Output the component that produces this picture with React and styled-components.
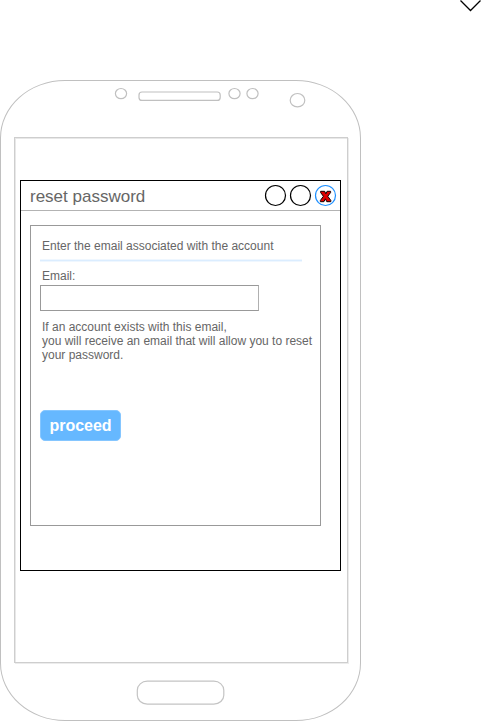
import React from "react";
import styled, { createGlobalStyle } from "styled-components";

const GlobalStyle = createGlobalStyle`
  *, *::before, *::after { box-sizing: border-box; }
  body { margin: 0; background: #fff; overflow: hidden; }
`;

const Page = styled.main`
  width: 482px;
  height: 721px;
  overflow: hidden;
  display: flex;
  flex-direction: column;
  background: #fff;
  font-family: "Liberation Sans", Arial, sans-serif;
  color: #666;
`;

const TopStrip = styled.div`
  height: 80px;
  flex: none;
  display: flex;
  justify-content: flex-end;
  align-items: flex-start;
`;

const Drawing = styled.svg`
  display: block;
  flex: none;
  fill: none;
  overflow: visible;
`;

const Phone = styled.section`
  width: 361px;
  height: 641px;
  flex: none;
  display: flex;
  flex-direction: column;
  border: 1px solid #c0c0c0;
  border-radius: 65px / 58px;
`;

const Screen = styled.div`
  width: 334px;
  height: 526px;
  flex: none;
  margin: 0 0 1px 13px;
  padding: 42px 0 0 5px;
  border: 1px solid #cecece;
  box-shadow: inset 1px 1px #e8e8e8, 1px 1px #ececec;
`;

const HomeRow = styled.div`
  flex: 1;
  padding: 16px 0 0 136px;
`;

const Window = styled.div`
  width: 321px;
  height: 391px;
  border: 1px solid #000;
`;

const TitleBar = styled.header`
  height: 30px;
  padding: 0 4px 0 9px;
  display: flex;
  align-items: center;
  justify-content: space-between;
  border-bottom: 1px solid #b3b3b3;
`;

const Title = styled.h1`
  margin: 2px 0 0;
  font-size: 17px;
  line-height: 20px;
  font-weight: 400;
`;

const Controls = styled.div`
  display: flex;
  gap: 4px;
`;

const Panel = styled.form`
  width: 291px;
  height: 301px;
  margin: 14px 0 0 9px;
  padding: 13px 0 0 9px;
  display: flex;
  flex-direction: column;
  align-items: flex-start;
  border: 1px solid #999;
  font-size: 12px;
  line-height: 14px;
`;

const Copy = styled.p`
  margin: 0;
  padding-left: 2px;
  white-space: pre;
`;

const Divider = styled.hr`
  width: 262px;
  height: 3px;
  margin: 6px 0 7px;
  border: solid #eff7ff;
  border-width: 1px 0;
  background: #dbedff;
`;

const Label = styled.label`
  padding-left: 2px;
`;

const Field = styled.input`
  width: 219px;
  height: 26px;
  margin: 2px 0 9px;
  border: 1px solid #999;
  border-right-color: #b0b0b0;
  border-radius: 0;
  background: #fff;
  outline: none;
`;

const Button = styled.button`
  width: 81px;
  height: 31px;
  margin-top: 48px;
  padding: 0;
  border: 1px solid #85c6ff;
  border-radius: 5px;
  background: #66b8ff;
  color: #fff;
  font: 700 16px/20px "Liberation Sans", Arial, sans-serif;
`;

function Chevron() {
  return (
    <Drawing width="22" height="12" viewBox="0 0 22 12" stroke="#000" strokeWidth="1.3">
      <path d="M0.5 0.5 10.5 10.5 20.5 0.5" />
    </Drawing>
  );
}

function Bezel() {
  return (
    <Drawing width="359" height="56" viewBox="1 81 359 56" stroke="#c0c0c0" strokeWidth="1.2">
      <ellipse cx="121" cy="93.6" rx="5.6" ry="5.1" />
      <rect x="139" y="92" width="81.2" height="8.4" rx="3" />
      <ellipse cx="234.5" cy="93.6" rx="5.6" ry="5.1" />
      <ellipse cx="252.5" cy="93.6" rx="5.6" ry="5.1" />
      <ellipse cx="297.5" cy="100.2" rx="7.3" ry="6.7" />
    </Drawing>
  );
}

function HomeButton() {
  return (
    <Drawing width="88" height="25" viewBox="137 680 88 25" stroke="#c4c4c4" strokeWidth="1.2">
      <rect x="137.3" y="681.2" width="86.5" height="23" rx="10" ry="9" />
    </Drawing>
  );
}

function WindowCircle({ close }) {
  return (
    <Drawing width="21" height="21" viewBox="0 0 21 21">
      <circle cx="10.5" cy="10.5" r="10" stroke={close ? "#1e90ff" : "#000"} strokeWidth="1.2" />
      {close && (
        <path
          d="M5.6 6.3h4.1l1.1 2.5 1.3-2.5h3.5v1.2l-2.8 3.8 3 4.1v1.3h-4l-1.4-2.9-1.5 2.9H5.4v-1.3l3-4.1-2.8-3.8z"
          fill="#e00000"
          stroke="#100"
          strokeWidth="1"
        />
      )}
    </Drawing>
  );
}

export default function App() {
  return (
    <>
      <GlobalStyle />
      <Page>
        <TopStrip>
          <Chevron />
        </TopStrip>
        <Phone>
          <Bezel />
          <Screen>
            <Window>
              <TitleBar>
                <Title>reset password</Title>
                <Controls>
                  <WindowCircle />
                  <WindowCircle />
                  <WindowCircle close />
                </Controls>
              </TitleBar>
              <Panel>
                <Copy>Enter the email associated with the account</Copy>
                <Divider />
                <Label htmlFor="email">Email:</Label>
                <Field id="email" type="email" />
                <Copy>{"If an account exists with this email,\nyou will receive an email that will allow you to reset\nyour password."}</Copy>
                <Button type="button">proceed</Button>
              </Panel>
            </Window>
          </Screen>
          <HomeRow>
            <HomeButton />
          </HomeRow>
        </Phone>
      </Page>
    </>
  );
}
